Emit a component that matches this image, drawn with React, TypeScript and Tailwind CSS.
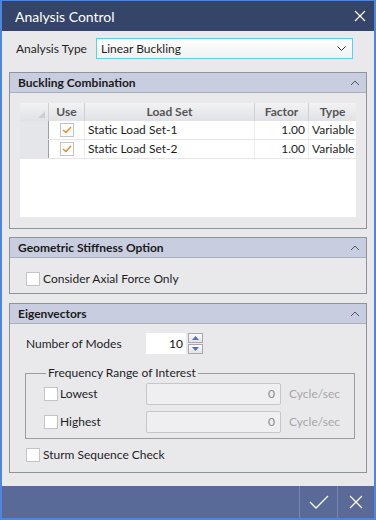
import React from 'react'

const font = { fontFamily: 'Lato, "Noto Sans", sans-serif' }

function Check({ checked = false }: { checked?: boolean }) {
    return (
        <span className="flex h-[14px] w-[14px] shrink-0 items-center justify-center border border-[#c4c4c4] bg-white">
            {checked && (
                <svg width="10" height="8" viewBox="0 0 10 8">
                    <path d="M1 4 L4 6.5 L9 1" fill="none" stroke="#f08a24" strokeWidth="1.5" />
                </svg>
            )}
        </span>
    )
}

function PanelHeader({ title }: { title: string }) {
    return (
        <div className="flex h-[20px] items-center justify-between border-b border-[#a9aebb] bg-[#c8cddf] pl-[8px] pr-[6px]">
            <span className="text-[12px] font-bold text-[#1a1a1a]">{title}</span>
            <svg width="10" height="6" viewBox="0 0 10 6">
                <path d="M1 5 L5 1 L9 5" fill="none" stroke="#555" strokeWidth="1" />
            </svg>
        </div>
    )
}

const rows = [
    { name: 'Static Load Set-1', factor: '1.00', type: 'Variable' },
    { name: 'Static Load Set-2', factor: '1.00', type: 'Variable' },
]

export default function App() {
    return (
        <div
            className="flex h-[520px] w-[376px] flex-col border-x-2 border-t border-b-2 border-[#4d86dc] bg-[#e9e9ec] text-[12px] text-[#1e1e1e]"
            style={font}>
            {/* title bar */}
            <div className="flex h-[30px] shrink-0 items-center justify-between bg-[#35456a] pl-[13px] pr-[8px]">
                <span className="text-[14px] text-white">Analysis Control</span>
                <svg width="12" height="12" viewBox="0 0 12 12">
                    <path d="M1 1 L11 11 M11 1 L1 11" stroke="#fff" strokeWidth="1.3" />
                </svg>
            </div>

            <div className="flex flex-1 flex-col px-[7px] pt-[7px]">
                <div className="flex h-[21px] items-center">
                    <span className="w-[80px] whitespace-nowrap pl-[7px]">Analysis Type</span>
                    <div className="ml-[7px] flex h-[21px] w-[257px] items-center justify-between border border-[#5ad0ee] bg-gradient-to-b from-white to-[#f1f1f3] pl-[4px] pr-[6px]">
                        <span>Linear Buckling</span>
                        <svg width="9" height="5" viewBox="0 0 9 5">
                            <path d="M0.5 0.5 L4.5 4.5 L8.5 0.5" fill="none" stroke="#333" strokeWidth="1" />
                        </svg>
                    </div>
                </div>

                {/* buckling combination */}
                <div className="mt-[13px] h-[157px] border border-[#8f939c]">
                    <PanelHeader title="Buckling Combination" />
                    <div className="px-[10px] pt-[10px]">
                        <div className="h-[114px] bg-white">
                            <div className="flex h-[18px] bg-gradient-to-b from-[#f2f2f4] to-[#e1e2e6] text-[12px] font-bold text-[#555]">
                                <div className="flex w-[29px] items-end justify-end border-r border-[#d0d0d4] pb-[3px] pr-[3px]">
                                    <svg width="7" height="7" viewBox="0 0 7 7">
                                        <path d="M7 0 L7 7 L0 7 Z" fill="#cfcfd2" />
                                    </svg>
                                </div>
                                <div className="flex w-[36px] items-center justify-center border-r border-[#d0d0d4]">Use</div>
                                <div className="flex w-[170px] items-center justify-center border-r border-[#d0d0d4]">Load Set</div>
                                <div className="flex w-[54px] items-center justify-center border-r border-[#d0d0d4]">Factor</div>
                                <div className="flex flex-1 items-center justify-center">Type</div>
                            </div>
                            {rows.map((r) => (
                                <div key={r.name} className="flex h-[19px] border-b border-[#e6e6e8]">
                                    <div className="w-[29px] border-r border-[#9aa0aa] bg-[#e5e6ea]" />
                                    <div className="flex w-[36px] items-center justify-center border-r border-[#ececee]">
                                        <Check checked />
                                    </div>
                                    <div className="flex w-[170px] items-center border-r border-[#ececee] pl-[3px]">{r.name}</div>
                                    <div className="flex w-[54px] items-center justify-end border-r border-[#ececee] pr-[3px]">{r.factor}</div>
                                    <div className="flex flex-1 items-center pl-[3px]">{r.type}</div>
                                </div>
                            ))}
                        </div>
                    </div>
                </div>

                {/* geometric stiffness */}
                <div className="mt-[8px] h-[57px] border border-[#8f939c]">
                    <PanelHeader title="Geometric Stiffness Option" />
                    <div className="flex items-center gap-[3px] pl-[16px] pt-[12px]">
                        <Check />
                        <span>Consider Axial Force Only</span>
                    </div>
                </div>

                {/* eigenvectors */}
                <div className="mt-[9px] h-[170px] border border-[#8f939c]">
                    <PanelHeader title="Eigenvectors" />
                    <div className="mt-[9px] flex h-[21px] items-center pl-[16px]">
                        <span className="w-[120px]">Number of Modes</span>
                        <div className="flex h-[21px] w-[40px] items-center justify-end bg-white pr-[3px] text-[#111]">10</div>
                        <div className="ml-[2px] flex flex-col gap-[1px]">
                            <span className="flex h-[10px] w-[15px] items-center justify-center border border-[#a8a8ac] bg-gradient-to-b from-[#fafafa] to-[#e4e4e8]">
                                <svg width="7" height="4" viewBox="0 0 7 4"><path d="M0 4 L3.5 0 L7 4 Z" fill="#5573b0" /></svg>
                            </span>
                            <span className="flex h-[10px] w-[15px] items-center justify-center border border-[#a8a8ac] bg-gradient-to-b from-[#fafafa] to-[#e4e4e8]">
                                <svg width="7" height="4" viewBox="0 0 7 4"><path d="M0 0 L3.5 4 L7 0 Z" fill="#5573b0" /></svg>
                            </span>
                        </div>
                    </div>

                    <fieldset className="ml-[15px] mr-[11px] mt-[12px] h-[73px] min-w-0 border border-[#9c9ca0] pl-[18px] pr-0 pt-[3px]">
                        <legend className="ml-[2px] px-[2px] leading-[14px]">Frequency Range of Interest</legend>
                        {['Lowest', 'Highest'].map((l, i) => (
                            <div key={l} className={`flex h-[22px] items-center whitespace-nowrap ${i === 1 ? 'mt-[6px]' : ''}`}>
                                <Check />
                                <span className="ml-[2px] w-[86px]">{l}</span>
                                <div className="flex h-[22px] w-[135px] shrink-0 items-center justify-end rounded-[2px] border border-[#c6c6ca] bg-[#efeff1] pr-[5px] text-[#8a8a8a]">0</div>
                                <span className="ml-[8px] text-[#a6a6a8]">Cycle/sec</span>
                            </div>
                        ))}
                    </fieldset>

                    <div className="mt-[7px] flex items-center gap-[3px] pl-[16px]">
                        <Check />
                        <span>Sturm Sequence Check</span>
                    </div>
                </div>
            </div>

            {/* bottom bar */}
            <div className="flex h-[32px] shrink-0 justify-end bg-[#5a6a98]">
                <div className="flex w-[38px] items-center justify-center border-l border-[#7583ad]">
                    <svg width="20" height="14" viewBox="0 0 20 14">
                        <path d="M1 7 L7 13 L19 1" fill="none" stroke="#fff" strokeWidth="1.3" />
                    </svg>
                </div>
                <div className="flex w-[37px] items-center justify-center border-l border-[#7583ad]">
                    <svg width="14" height="14" viewBox="0 0 14 14">
                        <path d="M1 1 L13 13 M13 1 L1 13" stroke="#fff" strokeWidth="1.3" />
                    </svg>
                </div>
            </div>
        </div>
    )
}
